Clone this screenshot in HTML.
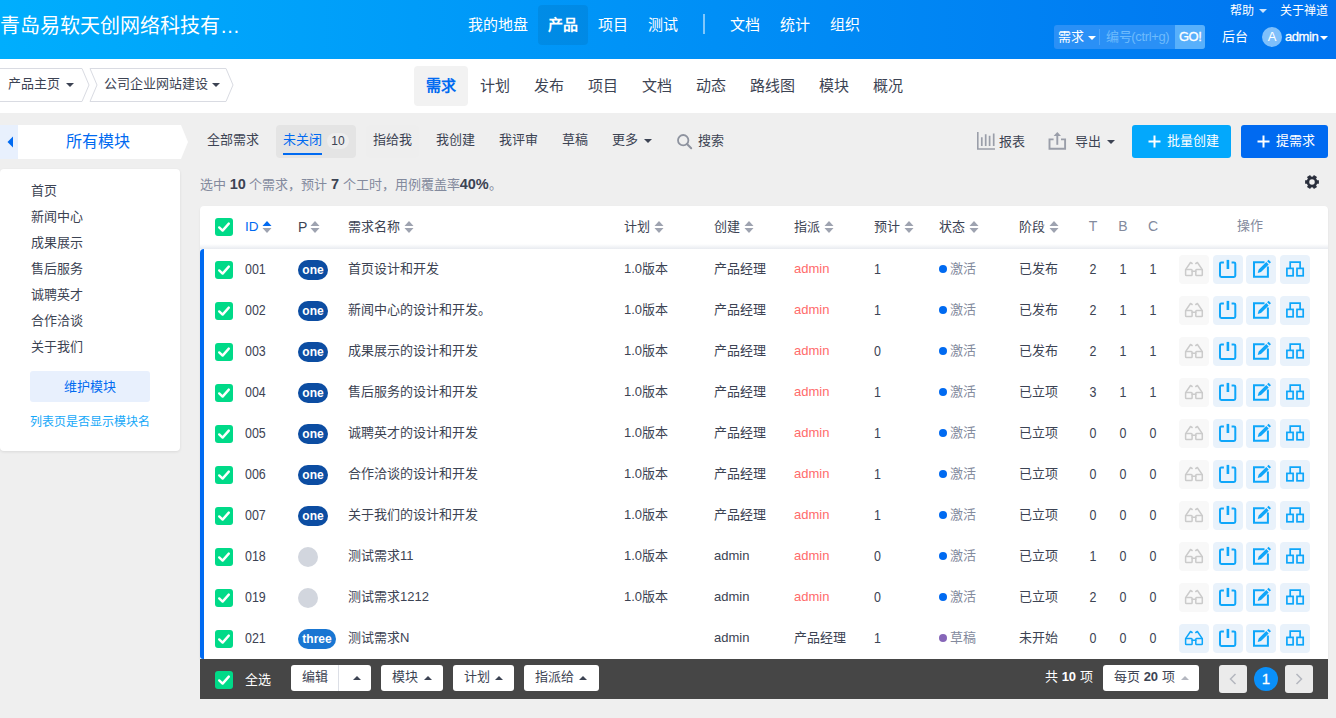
<!DOCTYPE html>
<html lang="zh-CN"><head><meta charset="utf-8"><title>需求</title>
<style>
*{box-sizing:border-box;margin:0;padding:0}
html,body{width:1336px;height:718px;overflow:hidden}
body{background:#efefef;font-family:"Liberation Sans",sans-serif;font-size:13px;color:#3c4353;position:relative;line-height:20px}
.abs{position:absolute}
.t{position:absolute;white-space:nowrap;line-height:20px}
#header{position:absolute;left:0;top:0;width:1336px;height:59px;background:linear-gradient(to right,#00aefd 0%,#0074f0 100%)}
#header .t{color:#fff}
#sub{position:absolute;left:0;top:59px;width:1336px;height:54px;background:#fff}
.caret{position:absolute;width:0;height:0;border-left:4px solid transparent;border-right:4px solid transparent;border-top:4px solid currentColor}
.caret.up{border-top:0;border-bottom:4px solid currentColor}
.cb{position:absolute;width:18px;height:18px;background:#00da88;border-radius:3px;display:block}
.cb svg{display:block}
.pill{position:absolute;height:20px;border-radius:10px;color:#fff;font-weight:bold;font-size:12px;line-height:20px;text-align:center}
.act{position:absolute;width:30px;height:29px;border-radius:4px;background:#e9f2fb}
.act.dis{background:#f8f8f8}
.act svg{display:block}
.num{font-size:14px;transform:scaleX(.89);transform-origin:left center}
.num.c{transform-origin:center center}
.fbtn{position:absolute;top:665px;height:26px;background:#fff;border-radius:3px;color:#3c4353}
</style></head><body>

<div id="header">
<div class="t" style="left:0px;top:12px;font-size:20px;line-height:28px;font-weight:300">青岛易软天创网络科技有…</div>
<div class="abs" style="left:538px;top:5px;width:50px;height:40px;border-radius:4px;background:rgba(0,0,0,.07)"></div>
<div class="t" style="left:468px;top:15px;font-size:15px;">我的地盘</div>
<div class="t" style="left:548px;top:15px;font-size:15px;font-weight:bold;">产品</div>
<div class="t" style="left:598px;top:15px;font-size:15px;">项目</div>
<div class="t" style="left:648px;top:15px;font-size:15px;">测试</div>
<div class="t" style="left:730px;top:15px;font-size:15px;">文档</div>
<div class="t" style="left:780px;top:15px;font-size:15px;">统计</div>
<div class="t" style="left:830px;top:15px;font-size:15px;">组织</div>
<div class="abs" style="left:703px;top:14px;width:2px;height:20px;background:rgba(255,255,255,.5)"></div>
<div class="t" style="left:1230px;top:1px;font-size:12px">帮助</div>
<div class="caret" style="left:1259px;top:9px;color:rgba(255,255,255,.8)"></div>
<div class="t" style="left:1280px;top:1px;font-size:12px">关于禅道</div>
<div class="abs" style="left:1054px;top:25px;width:151px;height:24px;border-radius:3px;background:#2a90f6"></div>
<div class="abs" style="left:1175px;top:25px;width:30px;height:24px;border-radius:0 3px 3px 0;background:#58b0fb"></div>
<div class="t" style="left:1058px;top:27px;font-size:13px">需求</div>
<div class="caret" style="left:1088px;top:36px;color:#fff"></div>
<div class="abs" style="left:1099px;top:29px;width:1px;height:16px;background:#4aa2f8"></div>
<div class="t" style="left:1106px;top:27px;font-size:13px;letter-spacing:-.35px;color:#6ebbfc">编号(ctrl+g)</div>
<div class="t" style="left:1179px;top:27px;font-size:13px;letter-spacing:-0.5px;-webkit-text-stroke:.3px #fff">GO!</div>
<div class="t" style="left:1222px;top:27px;font-size:13px">后台</div>
<div class="abs" style="left:1262px;top:27px;width:20px;height:20px;border-radius:10px;background:#7fc0fb;color:#fff;text-align:center;line-height:20px;font-size:13px">A</div>
<div class="t" style="left:1285px;top:27px;font-size:13px;letter-spacing:-0.45px;-webkit-text-stroke:.3px #fff">admin</div>
<div class="caret" style="left:1320px;top:36px;color:#fff;border-left-width:4.5px;border-right-width:4.5px;border-top-width:4.5px"></div>
</div>
<div id="sub">
<svg class="abs" style="left:0;top:8px" width="240" height="36" viewBox="0 0 240 36"><path d="M-2 1.5 H82 L89 18 L82 34.5 H-2 Z" fill="#fff" stroke="#d9dbe2" stroke-width="1"/><path d="M90 1.5 H226 L233 18 L226 34.5 H90 L97 18 Z" fill="#fff" stroke="#d9dbe2" stroke-width="1"/></svg>
<div class="t" style="left:8px;top:15px">产品主页</div><div class="caret" style="left:66px;top:24px;color:#3c4353"></div>
<div class="t" style="left:104px;top:15px">公司企业网站建设</div><div class="caret" style="left:212px;top:24px;color:#3c4353"></div>
<div class="abs" style="left:414px;top:7px;width:54px;height:40px;border-radius:4px;background:#f2f2f2"></div>
<div class="t" style="left:426px;top:17px;font-size:15px;color:#006af1;font-weight:bold;">需求</div>
<div class="t" style="left:480px;top:17px;font-size:15px;">计划</div>
<div class="t" style="left:534px;top:17px;font-size:15px;">发布</div>
<div class="t" style="left:588px;top:17px;font-size:15px;">项目</div>
<div class="t" style="left:642px;top:17px;font-size:15px;">文档</div>
<div class="t" style="left:696px;top:17px;font-size:15px;">动态</div>
<div class="t" style="left:750px;top:17px;font-size:15px;">路线图</div>
<div class="t" style="left:819px;top:17px;font-size:15px;">模块</div>
<div class="t" style="left:873px;top:17px;font-size:15px;">概况</div>
</div>
<div class="abs" style="left:0;top:125px;width:18px;height:34px;background:#e8f0fd"></div>
<svg class="abs" style="left:6px;top:136px" width="8" height="12" viewBox="0 0 8 12"><path d="M7 0.5 V11.5 L1.5 6 Z" fill="#006af1"/></svg>
<svg class="abs" style="left:18px;top:125px" width="171" height="34" viewBox="0 0 171 34"><path d="M0 0 H163 L170 17 L163 34 H0 Z" fill="#fff"/></svg>
<div class="t" style="left:66px;top:131px;font-size:16px;line-height:22px;color:#006af1">所有模块</div>
<div class="abs" style="left:276px;top:125px;width:80px;height:33px;border-radius:4px;background:#e4e4e4"></div>
<div class="abs" style="left:366px;top:125px;width:53px;height:33px;border-radius:4px;background:#eeeeee"></div>
<div class="t" style="left:207px;top:130px">全部需求</div>
<div class="t" style="left:283px;top:130px;color:#006af1">未关闭</div>
<div class="abs" style="left:283px;top:153px;width:39px;height:2px;background:#006af1"></div>
<div class="abs" style="left:327px;top:133px;width:22px;height:16px;border-radius:8px;background:#ededed;font-size:12px;line-height:16px;text-align:center">10</div>
<div class="t" style="left:373px;top:130px">指给我</div>
<div class="t" style="left:436px;top:130px">我创建</div>
<div class="t" style="left:499px;top:130px">我评审</div>
<div class="t" style="left:562px;top:130px">草稿</div>
<div class="t" style="left:612px;top:130px">更多</div><div class="caret" style="left:644px;top:139px;color:#3c4353"></div>
<svg class="abs" style="left:676px;top:133px" width="17" height="17" viewBox="0 0 17 17"><circle cx="7.2" cy="7.2" r="5.2" fill="none" stroke="#8e939f" stroke-width="1.8"/><path d="M11 11 L15.2 15.2" stroke="#8e939f" stroke-width="2" stroke-linecap="round"/></svg>
<div class="t" style="left:698px;top:131px">搜索</div>
<svg class="abs" style="left:976px;top:131px" width="20" height="20" viewBox="0 0 20 20"><path d="M1.8 1 V18 H19" fill="none" stroke="#9a9ea9" stroke-width="1.6"/><path d="M5.8 6.2 V15 M9.7 3.3 V15 M13.6 4.8 V15 M17.7 2.5 V15" stroke="#9a9ea9" stroke-width="1.7"/></svg>
<div class="t" style="left:999px;top:132px">报表</div>
<svg class="abs" style="left:1047px;top:130px" width="21" height="21" viewBox="0 0 21 21"><path d="M6.6 9.4 H2.5 V18.8 H18.1 V9.4 H14" fill="none" stroke="#9a9ea9" stroke-width="1.9"/><path d="M10.3 14.8 V4.5" fill="none" stroke="#9a9ea9" stroke-width="1.9"/><path d="M6.6 6 L10.3 2 L14 6 Z" fill="#9a9ea9"/></svg>
<div class="t" style="left:1075px;top:132px">导出</div><div class="caret" style="left:1107px;top:140px;color:#3c4353"></div>
<div class="abs" style="left:1132px;top:125px;width:99px;height:33px;border-radius:3px;background:#03a8fc"></div>
<svg class="abs" style="left:1148px;top:135px" width="13" height="13" viewBox="0 0 13 13"><path d="M6.5 0.5 V12.5 M0.5 6.5 H12.5" stroke="#fff" stroke-width="2"/></svg>
<div class="t" style="left:1167px;top:131px;color:#fff">批量创建</div>
<div class="abs" style="left:1241px;top:125px;width:87px;height:33px;border-radius:3px;background:#006af1"></div>
<svg class="abs" style="left:1257px;top:135px" width="13" height="13" viewBox="0 0 13 13"><path d="M6.5 0.5 V12.5 M0.5 6.5 H12.5" stroke="#fff" stroke-width="2"/></svg>
<div class="t" style="left:1276px;top:131px;color:#fff">提需求</div>
<div class="abs" style="left:0;top:169px;width:180px;height:282px;background:#fff;border-radius:4px;box-shadow:0 1px 3px rgba(0,0,0,.09)"></div>
<div class="t" style="left:31px;top:181px">首页</div>
<div class="t" style="left:31px;top:207px">新闻中心</div>
<div class="t" style="left:31px;top:233px">成果展示</div>
<div class="t" style="left:31px;top:259px">售后服务</div>
<div class="t" style="left:31px;top:285px">诚聘英才</div>
<div class="t" style="left:31px;top:311px">合作洽谈</div>
<div class="t" style="left:31px;top:337px">关于我们</div>
<div class="abs" style="left:30px;top:371px;width:120px;height:31px;border-radius:3px;background:#e8f0fd;color:#006af1;text-align:center;line-height:31px">维护模块</div>
<div class="t" style="left:30px;top:412px;font-size:12px;color:#16a8f8">列表页是否显示模块名</div>
<div class="t" style="left:200px;top:174px;color:#838a9d">选中 <b style="color:#3c4353;font-size:14.5px">10</b> 个需求，预计 <b style="color:#3c4353;font-size:14.5px">7</b> 个工时，用例覆盖率<b style="color:#3c4353;font-size:14.5px">40%</b>。</div>
<svg class="abs" style="left:1304px;top:174px" width="16" height="16" viewBox="0 0 16 16"><circle cx="8" cy="8" r="4.1" fill="none" stroke="#2a2f3c" stroke-width="2.7"/><path d="M12.60 8.00 L14.90 8.00 M10.30 11.98 L11.45 13.98 M5.70 11.98 L4.55 13.98 M3.40 8.00 L1.10 8.00 M5.70 4.02 L4.55 2.02 M10.30 4.02 L11.45 2.02" stroke="#2a2f3c" stroke-width="3.6" stroke-linecap="butt"/></svg>
<div class="abs" style="left:200px;top:206px;width:1128px;height:453px;background:#fff;border-radius:4px 4px 0 0;box-shadow:0 1px 2px rgba(0,0,0,.08)"></div>
<div class="abs" style="left:200px;top:244px;width:1128px;height:5px;background:linear-gradient(to bottom,#fff,#e8ebf0)"></div>
<div class="abs" style="left:200px;top:249px;width:4px;height:410px;background:#006af1;border-radius:4px 0 0 3px"></div>
<span class="cb" style="left:215px;top:218px"><svg viewBox="0 0 18 18" width="18" height="18"><path d="M4.2 9.4 L7.6 12.6 L13.8 5.6" fill="none" stroke="#fff" stroke-width="2.4" stroke-linecap="round" stroke-linejoin="round"/></svg></span>
<div class="t" style="left:245px;top:217px;color:#006af1;font-size:13.5px">ID</div><svg class="abs" style="left:262px;top:220px" width="10" height="14" viewBox="0 0 10 14"><path d="M5 1 L9.5 6 H0.5 Z" fill="#006af1"/><path d="M5 13 L9.5 8 H0.5 Z" fill="#9ea3b0"/></svg>
<div class="t" style="left:298px;top:217px;font-size:14px">P</div><svg class="abs" style="left:310px;top:220px" width="10" height="14" viewBox="0 0 10 14"><path d="M5 1 L9.5 6 H0.5 Z" fill="#9ea3b0"/><path d="M5 13 L9.5 8 H0.5 Z" fill="#9ea3b0"/></svg>
<div class="t" style="left:348px;top:217px">需求名称</div><svg class="abs" style="left:404px;top:220px" width="10" height="14" viewBox="0 0 10 14"><path d="M5 1 L9.5 6 H0.5 Z" fill="#9ea3b0"/><path d="M5 13 L9.5 8 H0.5 Z" fill="#9ea3b0"/></svg>
<div class="t" style="left:624px;top:217px">计划</div><svg class="abs" style="left:654px;top:220px" width="10" height="14" viewBox="0 0 10 14"><path d="M5 1 L9.5 6 H0.5 Z" fill="#9ea3b0"/><path d="M5 13 L9.5 8 H0.5 Z" fill="#9ea3b0"/></svg>
<div class="t" style="left:714px;top:217px">创建</div><svg class="abs" style="left:744px;top:220px" width="10" height="14" viewBox="0 0 10 14"><path d="M5 1 L9.5 6 H0.5 Z" fill="#9ea3b0"/><path d="M5 13 L9.5 8 H0.5 Z" fill="#9ea3b0"/></svg>
<div class="t" style="left:794px;top:217px">指派</div><svg class="abs" style="left:824px;top:220px" width="10" height="14" viewBox="0 0 10 14"><path d="M5 1 L9.5 6 H0.5 Z" fill="#9ea3b0"/><path d="M5 13 L9.5 8 H0.5 Z" fill="#9ea3b0"/></svg>
<div class="t" style="left:874px;top:217px">预计</div><svg class="abs" style="left:904px;top:220px" width="10" height="14" viewBox="0 0 10 14"><path d="M5 1 L9.5 6 H0.5 Z" fill="#9ea3b0"/><path d="M5 13 L9.5 8 H0.5 Z" fill="#9ea3b0"/></svg>
<div class="t" style="left:939px;top:217px">状态</div><svg class="abs" style="left:969px;top:220px" width="10" height="14" viewBox="0 0 10 14"><path d="M5 1 L9.5 6 H0.5 Z" fill="#9ea3b0"/><path d="M5 13 L9.5 8 H0.5 Z" fill="#9ea3b0"/></svg>
<div class="t" style="left:1019px;top:217px">阶段</div><svg class="abs" style="left:1049px;top:220px" width="10" height="14" viewBox="0 0 10 14"><path d="M5 1 L9.5 6 H0.5 Z" fill="#9ea3b0"/><path d="M5 13 L9.5 8 H0.5 Z" fill="#9ea3b0"/></svg>
<div class="t" style="left:1083px;width:20px;text-align:center;top:216px;color:#838a9d;font-size:14px">T</div>
<div class="t" style="left:1113px;width:20px;text-align:center;top:216px;color:#838a9d;font-size:14px">B</div>
<div class="t" style="left:1143px;width:20px;text-align:center;top:216px;color:#838a9d;font-size:14px">C</div>
<div class="t" style="left:1237px;top:216px;color:#838a9d">操作</div>
<span class="cb" style="left:215px;top:261px"><svg viewBox="0 0 18 18" width="18" height="18"><path d="M4.2 9.4 L7.6 12.6 L13.8 5.6" fill="none" stroke="#fff" stroke-width="2.4" stroke-linecap="round" stroke-linejoin="round"/></svg></span>
<div class="t num" style="left:245px;top:259px">001</div>
<div class="pill" style="left:298px;top:260px;width:30px;background:#0c4da2">one</div>
<div class="t" style="left:348px;top:259px">首页设计和开发</div>
<div class="t" style="left:624px;top:259px">1.0版本</div>
<div class="t" style="left:714px;top:259px">产品经理</div>
<div class="t" style="left:794px;top:259px;color:#ff6b6b">admin</div>
<div class="t num" style="left:874px;top:259px">1</div>
<div class="abs" style="left:939px;top:265px;width:8px;height:8px;border-radius:4px;background:#006af1"></div>
<div class="t" style="left:950px;top:259px;color:#838a9d">激活</div>
<div class="t" style="left:1019px;top:259px">已发布</div>
<div class="t num c" style="left:1083px;width:20px;text-align:center;top:259px">2</div>
<div class="t num c" style="left:1113px;width:20px;text-align:center;top:259px">1</div>
<div class="t num c" style="left:1143px;width:20px;text-align:center;top:259px">1</div>
<div class="act dis" style="left:1179px;top:255px"><svg viewBox="0 0 30 29" width="30" height="29"><g fill="none" stroke="#cbcbcb" stroke-width="1.5" stroke-linejoin="round" stroke-linecap="round"><rect x="6.6" y="14.4" width="6.5" height="6.2" rx="0.8"/><rect x="16.8" y="14.4" width="6.5" height="6.2" rx="0.8"/><path d="M13.1 16.2 H16.8"/><path d="M6.6 14.6 L11.5 7.5 L13.1 8.5"/><path d="M23.3 14.6 L18.4 7.5 L16.8 8.5"/></g></svg></div>
<div class="act" style="left:1213px;top:255px"><svg viewBox="0 0 30 29" width="30" height="29"><g fill="none" stroke="#0ea6fa" stroke-linecap="butt" stroke-linejoin="round"><path d="M10.9 7.4 H8.4 Q7 7.4 7 8.8 V20.6 Q7 22 8.4 22 H20.9 Q22.3 22 22.3 20.6 V8.8 Q22.3 7.4 20.9 7.4 H18.6" stroke-width="2"/><path d="M14.9 4.9 V14" stroke-width="2.6"/></g></svg></div>
<div class="act" style="left:1246px;top:255px"><svg viewBox="0 0 30 29" width="30" height="29"><path d="M18.5 7.2 H8 V21.7 H21.9 V11.5" fill="none" stroke="#0ea6fa" stroke-width="2" stroke-linejoin="miter"/><path d="M11.7 17.9 L12.7 14.6 L20.3 7 L22.7 9.4 L15 17 Z M21.1 6.2 L22.6 4.8 L25 7.2 L23.5 8.6 Z" fill="#0ea6fa"/></svg></div>
<div class="act" style="left:1280px;top:255px"><svg viewBox="0 0 30 29" width="30" height="29"><g fill="none" stroke="#0ea6fa" stroke-width="1.7" stroke-linejoin="miter"><rect x="6.9" y="13.4" width="6.2" height="7.4"/><rect x="17" y="13.4" width="6.2" height="7.4"/><path d="M10.2 13.4 V7.1 H20.1 V13.4"/></g></svg></div>
<span class="cb" style="left:215px;top:302px"><svg viewBox="0 0 18 18" width="18" height="18"><path d="M4.2 9.4 L7.6 12.6 L13.8 5.6" fill="none" stroke="#fff" stroke-width="2.4" stroke-linecap="round" stroke-linejoin="round"/></svg></span>
<div class="t num" style="left:245px;top:300px">002</div>
<div class="pill" style="left:298px;top:301px;width:30px;background:#0c4da2">one</div>
<div class="t" style="left:348px;top:300px">新闻中心的设计和开发。</div>
<div class="t" style="left:624px;top:300px">1.0版本</div>
<div class="t" style="left:714px;top:300px">产品经理</div>
<div class="t" style="left:794px;top:300px;color:#ff6b6b">admin</div>
<div class="t num" style="left:874px;top:300px">1</div>
<div class="abs" style="left:939px;top:306px;width:8px;height:8px;border-radius:4px;background:#006af1"></div>
<div class="t" style="left:950px;top:300px;color:#838a9d">激活</div>
<div class="t" style="left:1019px;top:300px">已发布</div>
<div class="t num c" style="left:1083px;width:20px;text-align:center;top:300px">2</div>
<div class="t num c" style="left:1113px;width:20px;text-align:center;top:300px">1</div>
<div class="t num c" style="left:1143px;width:20px;text-align:center;top:300px">1</div>
<div class="act dis" style="left:1179px;top:296px"><svg viewBox="0 0 30 29" width="30" height="29"><g fill="none" stroke="#cbcbcb" stroke-width="1.5" stroke-linejoin="round" stroke-linecap="round"><rect x="6.6" y="14.4" width="6.5" height="6.2" rx="0.8"/><rect x="16.8" y="14.4" width="6.5" height="6.2" rx="0.8"/><path d="M13.1 16.2 H16.8"/><path d="M6.6 14.6 L11.5 7.5 L13.1 8.5"/><path d="M23.3 14.6 L18.4 7.5 L16.8 8.5"/></g></svg></div>
<div class="act" style="left:1213px;top:296px"><svg viewBox="0 0 30 29" width="30" height="29"><g fill="none" stroke="#0ea6fa" stroke-linecap="butt" stroke-linejoin="round"><path d="M10.9 7.4 H8.4 Q7 7.4 7 8.8 V20.6 Q7 22 8.4 22 H20.9 Q22.3 22 22.3 20.6 V8.8 Q22.3 7.4 20.9 7.4 H18.6" stroke-width="2"/><path d="M14.9 4.9 V14" stroke-width="2.6"/></g></svg></div>
<div class="act" style="left:1246px;top:296px"><svg viewBox="0 0 30 29" width="30" height="29"><path d="M18.5 7.2 H8 V21.7 H21.9 V11.5" fill="none" stroke="#0ea6fa" stroke-width="2" stroke-linejoin="miter"/><path d="M11.7 17.9 L12.7 14.6 L20.3 7 L22.7 9.4 L15 17 Z M21.1 6.2 L22.6 4.8 L25 7.2 L23.5 8.6 Z" fill="#0ea6fa"/></svg></div>
<div class="act" style="left:1280px;top:296px"><svg viewBox="0 0 30 29" width="30" height="29"><g fill="none" stroke="#0ea6fa" stroke-width="1.7" stroke-linejoin="miter"><rect x="6.9" y="13.4" width="6.2" height="7.4"/><rect x="17" y="13.4" width="6.2" height="7.4"/><path d="M10.2 13.4 V7.1 H20.1 V13.4"/></g></svg></div>
<span class="cb" style="left:215px;top:343px"><svg viewBox="0 0 18 18" width="18" height="18"><path d="M4.2 9.4 L7.6 12.6 L13.8 5.6" fill="none" stroke="#fff" stroke-width="2.4" stroke-linecap="round" stroke-linejoin="round"/></svg></span>
<div class="t num" style="left:245px;top:341px">003</div>
<div class="pill" style="left:298px;top:342px;width:30px;background:#0c4da2">one</div>
<div class="t" style="left:348px;top:341px">成果展示的设计和开发</div>
<div class="t" style="left:624px;top:341px">1.0版本</div>
<div class="t" style="left:714px;top:341px">产品经理</div>
<div class="t" style="left:794px;top:341px;color:#ff6b6b">admin</div>
<div class="t num" style="left:874px;top:341px">0</div>
<div class="abs" style="left:939px;top:347px;width:8px;height:8px;border-radius:4px;background:#006af1"></div>
<div class="t" style="left:950px;top:341px;color:#838a9d">激活</div>
<div class="t" style="left:1019px;top:341px">已发布</div>
<div class="t num c" style="left:1083px;width:20px;text-align:center;top:341px">2</div>
<div class="t num c" style="left:1113px;width:20px;text-align:center;top:341px">1</div>
<div class="t num c" style="left:1143px;width:20px;text-align:center;top:341px">1</div>
<div class="act dis" style="left:1179px;top:337px"><svg viewBox="0 0 30 29" width="30" height="29"><g fill="none" stroke="#cbcbcb" stroke-width="1.5" stroke-linejoin="round" stroke-linecap="round"><rect x="6.6" y="14.4" width="6.5" height="6.2" rx="0.8"/><rect x="16.8" y="14.4" width="6.5" height="6.2" rx="0.8"/><path d="M13.1 16.2 H16.8"/><path d="M6.6 14.6 L11.5 7.5 L13.1 8.5"/><path d="M23.3 14.6 L18.4 7.5 L16.8 8.5"/></g></svg></div>
<div class="act" style="left:1213px;top:337px"><svg viewBox="0 0 30 29" width="30" height="29"><g fill="none" stroke="#0ea6fa" stroke-linecap="butt" stroke-linejoin="round"><path d="M10.9 7.4 H8.4 Q7 7.4 7 8.8 V20.6 Q7 22 8.4 22 H20.9 Q22.3 22 22.3 20.6 V8.8 Q22.3 7.4 20.9 7.4 H18.6" stroke-width="2"/><path d="M14.9 4.9 V14" stroke-width="2.6"/></g></svg></div>
<div class="act" style="left:1246px;top:337px"><svg viewBox="0 0 30 29" width="30" height="29"><path d="M18.5 7.2 H8 V21.7 H21.9 V11.5" fill="none" stroke="#0ea6fa" stroke-width="2" stroke-linejoin="miter"/><path d="M11.7 17.9 L12.7 14.6 L20.3 7 L22.7 9.4 L15 17 Z M21.1 6.2 L22.6 4.8 L25 7.2 L23.5 8.6 Z" fill="#0ea6fa"/></svg></div>
<div class="act" style="left:1280px;top:337px"><svg viewBox="0 0 30 29" width="30" height="29"><g fill="none" stroke="#0ea6fa" stroke-width="1.7" stroke-linejoin="miter"><rect x="6.9" y="13.4" width="6.2" height="7.4"/><rect x="17" y="13.4" width="6.2" height="7.4"/><path d="M10.2 13.4 V7.1 H20.1 V13.4"/></g></svg></div>
<span class="cb" style="left:215px;top:384px"><svg viewBox="0 0 18 18" width="18" height="18"><path d="M4.2 9.4 L7.6 12.6 L13.8 5.6" fill="none" stroke="#fff" stroke-width="2.4" stroke-linecap="round" stroke-linejoin="round"/></svg></span>
<div class="t num" style="left:245px;top:382px">004</div>
<div class="pill" style="left:298px;top:383px;width:30px;background:#0c4da2">one</div>
<div class="t" style="left:348px;top:382px">售后服务的设计和开发</div>
<div class="t" style="left:624px;top:382px">1.0版本</div>
<div class="t" style="left:714px;top:382px">产品经理</div>
<div class="t" style="left:794px;top:382px;color:#ff6b6b">admin</div>
<div class="t num" style="left:874px;top:382px">1</div>
<div class="abs" style="left:939px;top:388px;width:8px;height:8px;border-radius:4px;background:#006af1"></div>
<div class="t" style="left:950px;top:382px;color:#838a9d">激活</div>
<div class="t" style="left:1019px;top:382px">已立项</div>
<div class="t num c" style="left:1083px;width:20px;text-align:center;top:382px">3</div>
<div class="t num c" style="left:1113px;width:20px;text-align:center;top:382px">1</div>
<div class="t num c" style="left:1143px;width:20px;text-align:center;top:382px">1</div>
<div class="act dis" style="left:1179px;top:378px"><svg viewBox="0 0 30 29" width="30" height="29"><g fill="none" stroke="#cbcbcb" stroke-width="1.5" stroke-linejoin="round" stroke-linecap="round"><rect x="6.6" y="14.4" width="6.5" height="6.2" rx="0.8"/><rect x="16.8" y="14.4" width="6.5" height="6.2" rx="0.8"/><path d="M13.1 16.2 H16.8"/><path d="M6.6 14.6 L11.5 7.5 L13.1 8.5"/><path d="M23.3 14.6 L18.4 7.5 L16.8 8.5"/></g></svg></div>
<div class="act" style="left:1213px;top:378px"><svg viewBox="0 0 30 29" width="30" height="29"><g fill="none" stroke="#0ea6fa" stroke-linecap="butt" stroke-linejoin="round"><path d="M10.9 7.4 H8.4 Q7 7.4 7 8.8 V20.6 Q7 22 8.4 22 H20.9 Q22.3 22 22.3 20.6 V8.8 Q22.3 7.4 20.9 7.4 H18.6" stroke-width="2"/><path d="M14.9 4.9 V14" stroke-width="2.6"/></g></svg></div>
<div class="act" style="left:1246px;top:378px"><svg viewBox="0 0 30 29" width="30" height="29"><path d="M18.5 7.2 H8 V21.7 H21.9 V11.5" fill="none" stroke="#0ea6fa" stroke-width="2" stroke-linejoin="miter"/><path d="M11.7 17.9 L12.7 14.6 L20.3 7 L22.7 9.4 L15 17 Z M21.1 6.2 L22.6 4.8 L25 7.2 L23.5 8.6 Z" fill="#0ea6fa"/></svg></div>
<div class="act" style="left:1280px;top:378px"><svg viewBox="0 0 30 29" width="30" height="29"><g fill="none" stroke="#0ea6fa" stroke-width="1.7" stroke-linejoin="miter"><rect x="6.9" y="13.4" width="6.2" height="7.4"/><rect x="17" y="13.4" width="6.2" height="7.4"/><path d="M10.2 13.4 V7.1 H20.1 V13.4"/></g></svg></div>
<span class="cb" style="left:215px;top:425px"><svg viewBox="0 0 18 18" width="18" height="18"><path d="M4.2 9.4 L7.6 12.6 L13.8 5.6" fill="none" stroke="#fff" stroke-width="2.4" stroke-linecap="round" stroke-linejoin="round"/></svg></span>
<div class="t num" style="left:245px;top:423px">005</div>
<div class="pill" style="left:298px;top:424px;width:30px;background:#0c4da2">one</div>
<div class="t" style="left:348px;top:423px">诚聘英才的设计和开发</div>
<div class="t" style="left:624px;top:423px">1.0版本</div>
<div class="t" style="left:714px;top:423px">产品经理</div>
<div class="t" style="left:794px;top:423px;color:#ff6b6b">admin</div>
<div class="t num" style="left:874px;top:423px">1</div>
<div class="abs" style="left:939px;top:429px;width:8px;height:8px;border-radius:4px;background:#006af1"></div>
<div class="t" style="left:950px;top:423px;color:#838a9d">激活</div>
<div class="t" style="left:1019px;top:423px">已立项</div>
<div class="t num c" style="left:1083px;width:20px;text-align:center;top:423px">0</div>
<div class="t num c" style="left:1113px;width:20px;text-align:center;top:423px">0</div>
<div class="t num c" style="left:1143px;width:20px;text-align:center;top:423px">0</div>
<div class="act dis" style="left:1179px;top:419px"><svg viewBox="0 0 30 29" width="30" height="29"><g fill="none" stroke="#cbcbcb" stroke-width="1.5" stroke-linejoin="round" stroke-linecap="round"><rect x="6.6" y="14.4" width="6.5" height="6.2" rx="0.8"/><rect x="16.8" y="14.4" width="6.5" height="6.2" rx="0.8"/><path d="M13.1 16.2 H16.8"/><path d="M6.6 14.6 L11.5 7.5 L13.1 8.5"/><path d="M23.3 14.6 L18.4 7.5 L16.8 8.5"/></g></svg></div>
<div class="act" style="left:1213px;top:419px"><svg viewBox="0 0 30 29" width="30" height="29"><g fill="none" stroke="#0ea6fa" stroke-linecap="butt" stroke-linejoin="round"><path d="M10.9 7.4 H8.4 Q7 7.4 7 8.8 V20.6 Q7 22 8.4 22 H20.9 Q22.3 22 22.3 20.6 V8.8 Q22.3 7.4 20.9 7.4 H18.6" stroke-width="2"/><path d="M14.9 4.9 V14" stroke-width="2.6"/></g></svg></div>
<div class="act" style="left:1246px;top:419px"><svg viewBox="0 0 30 29" width="30" height="29"><path d="M18.5 7.2 H8 V21.7 H21.9 V11.5" fill="none" stroke="#0ea6fa" stroke-width="2" stroke-linejoin="miter"/><path d="M11.7 17.9 L12.7 14.6 L20.3 7 L22.7 9.4 L15 17 Z M21.1 6.2 L22.6 4.8 L25 7.2 L23.5 8.6 Z" fill="#0ea6fa"/></svg></div>
<div class="act" style="left:1280px;top:419px"><svg viewBox="0 0 30 29" width="30" height="29"><g fill="none" stroke="#0ea6fa" stroke-width="1.7" stroke-linejoin="miter"><rect x="6.9" y="13.4" width="6.2" height="7.4"/><rect x="17" y="13.4" width="6.2" height="7.4"/><path d="M10.2 13.4 V7.1 H20.1 V13.4"/></g></svg></div>
<span class="cb" style="left:215px;top:466px"><svg viewBox="0 0 18 18" width="18" height="18"><path d="M4.2 9.4 L7.6 12.6 L13.8 5.6" fill="none" stroke="#fff" stroke-width="2.4" stroke-linecap="round" stroke-linejoin="round"/></svg></span>
<div class="t num" style="left:245px;top:464px">006</div>
<div class="pill" style="left:298px;top:465px;width:30px;background:#0c4da2">one</div>
<div class="t" style="left:348px;top:464px">合作洽谈的设计和开发</div>
<div class="t" style="left:624px;top:464px">1.0版本</div>
<div class="t" style="left:714px;top:464px">产品经理</div>
<div class="t" style="left:794px;top:464px;color:#ff6b6b">admin</div>
<div class="t num" style="left:874px;top:464px">1</div>
<div class="abs" style="left:939px;top:470px;width:8px;height:8px;border-radius:4px;background:#006af1"></div>
<div class="t" style="left:950px;top:464px;color:#838a9d">激活</div>
<div class="t" style="left:1019px;top:464px">已立项</div>
<div class="t num c" style="left:1083px;width:20px;text-align:center;top:464px">0</div>
<div class="t num c" style="left:1113px;width:20px;text-align:center;top:464px">0</div>
<div class="t num c" style="left:1143px;width:20px;text-align:center;top:464px">0</div>
<div class="act dis" style="left:1179px;top:460px"><svg viewBox="0 0 30 29" width="30" height="29"><g fill="none" stroke="#cbcbcb" stroke-width="1.5" stroke-linejoin="round" stroke-linecap="round"><rect x="6.6" y="14.4" width="6.5" height="6.2" rx="0.8"/><rect x="16.8" y="14.4" width="6.5" height="6.2" rx="0.8"/><path d="M13.1 16.2 H16.8"/><path d="M6.6 14.6 L11.5 7.5 L13.1 8.5"/><path d="M23.3 14.6 L18.4 7.5 L16.8 8.5"/></g></svg></div>
<div class="act" style="left:1213px;top:460px"><svg viewBox="0 0 30 29" width="30" height="29"><g fill="none" stroke="#0ea6fa" stroke-linecap="butt" stroke-linejoin="round"><path d="M10.9 7.4 H8.4 Q7 7.4 7 8.8 V20.6 Q7 22 8.4 22 H20.9 Q22.3 22 22.3 20.6 V8.8 Q22.3 7.4 20.9 7.4 H18.6" stroke-width="2"/><path d="M14.9 4.9 V14" stroke-width="2.6"/></g></svg></div>
<div class="act" style="left:1246px;top:460px"><svg viewBox="0 0 30 29" width="30" height="29"><path d="M18.5 7.2 H8 V21.7 H21.9 V11.5" fill="none" stroke="#0ea6fa" stroke-width="2" stroke-linejoin="miter"/><path d="M11.7 17.9 L12.7 14.6 L20.3 7 L22.7 9.4 L15 17 Z M21.1 6.2 L22.6 4.8 L25 7.2 L23.5 8.6 Z" fill="#0ea6fa"/></svg></div>
<div class="act" style="left:1280px;top:460px"><svg viewBox="0 0 30 29" width="30" height="29"><g fill="none" stroke="#0ea6fa" stroke-width="1.7" stroke-linejoin="miter"><rect x="6.9" y="13.4" width="6.2" height="7.4"/><rect x="17" y="13.4" width="6.2" height="7.4"/><path d="M10.2 13.4 V7.1 H20.1 V13.4"/></g></svg></div>
<span class="cb" style="left:215px;top:507px"><svg viewBox="0 0 18 18" width="18" height="18"><path d="M4.2 9.4 L7.6 12.6 L13.8 5.6" fill="none" stroke="#fff" stroke-width="2.4" stroke-linecap="round" stroke-linejoin="round"/></svg></span>
<div class="t num" style="left:245px;top:505px">007</div>
<div class="pill" style="left:298px;top:506px;width:30px;background:#0c4da2">one</div>
<div class="t" style="left:348px;top:505px">关于我们的设计和开发</div>
<div class="t" style="left:624px;top:505px">1.0版本</div>
<div class="t" style="left:714px;top:505px">产品经理</div>
<div class="t" style="left:794px;top:505px;color:#ff6b6b">admin</div>
<div class="t num" style="left:874px;top:505px">1</div>
<div class="abs" style="left:939px;top:511px;width:8px;height:8px;border-radius:4px;background:#006af1"></div>
<div class="t" style="left:950px;top:505px;color:#838a9d">激活</div>
<div class="t" style="left:1019px;top:505px">已立项</div>
<div class="t num c" style="left:1083px;width:20px;text-align:center;top:505px">0</div>
<div class="t num c" style="left:1113px;width:20px;text-align:center;top:505px">0</div>
<div class="t num c" style="left:1143px;width:20px;text-align:center;top:505px">0</div>
<div class="act dis" style="left:1179px;top:501px"><svg viewBox="0 0 30 29" width="30" height="29"><g fill="none" stroke="#cbcbcb" stroke-width="1.5" stroke-linejoin="round" stroke-linecap="round"><rect x="6.6" y="14.4" width="6.5" height="6.2" rx="0.8"/><rect x="16.8" y="14.4" width="6.5" height="6.2" rx="0.8"/><path d="M13.1 16.2 H16.8"/><path d="M6.6 14.6 L11.5 7.5 L13.1 8.5"/><path d="M23.3 14.6 L18.4 7.5 L16.8 8.5"/></g></svg></div>
<div class="act" style="left:1213px;top:501px"><svg viewBox="0 0 30 29" width="30" height="29"><g fill="none" stroke="#0ea6fa" stroke-linecap="butt" stroke-linejoin="round"><path d="M10.9 7.4 H8.4 Q7 7.4 7 8.8 V20.6 Q7 22 8.4 22 H20.9 Q22.3 22 22.3 20.6 V8.8 Q22.3 7.4 20.9 7.4 H18.6" stroke-width="2"/><path d="M14.9 4.9 V14" stroke-width="2.6"/></g></svg></div>
<div class="act" style="left:1246px;top:501px"><svg viewBox="0 0 30 29" width="30" height="29"><path d="M18.5 7.2 H8 V21.7 H21.9 V11.5" fill="none" stroke="#0ea6fa" stroke-width="2" stroke-linejoin="miter"/><path d="M11.7 17.9 L12.7 14.6 L20.3 7 L22.7 9.4 L15 17 Z M21.1 6.2 L22.6 4.8 L25 7.2 L23.5 8.6 Z" fill="#0ea6fa"/></svg></div>
<div class="act" style="left:1280px;top:501px"><svg viewBox="0 0 30 29" width="30" height="29"><g fill="none" stroke="#0ea6fa" stroke-width="1.7" stroke-linejoin="miter"><rect x="6.9" y="13.4" width="6.2" height="7.4"/><rect x="17" y="13.4" width="6.2" height="7.4"/><path d="M10.2 13.4 V7.1 H20.1 V13.4"/></g></svg></div>
<span class="cb" style="left:215px;top:548px"><svg viewBox="0 0 18 18" width="18" height="18"><path d="M4.2 9.4 L7.6 12.6 L13.8 5.6" fill="none" stroke="#fff" stroke-width="2.4" stroke-linecap="round" stroke-linejoin="round"/></svg></span>
<div class="t num" style="left:245px;top:546px">018</div>
<div class="pill" style="left:298px;top:547px;width:20px;background:#d2d6de"></div>
<div class="t" style="left:348px;top:546px">测试需求11</div>
<div class="t" style="left:624px;top:546px">1.0版本</div>
<div class="t" style="left:714px;top:546px">admin</div>
<div class="t" style="left:794px;top:546px;color:#ff6b6b">admin</div>
<div class="t num" style="left:874px;top:546px">0</div>
<div class="abs" style="left:939px;top:552px;width:8px;height:8px;border-radius:4px;background:#006af1"></div>
<div class="t" style="left:950px;top:546px;color:#838a9d">激活</div>
<div class="t" style="left:1019px;top:546px">已立项</div>
<div class="t num c" style="left:1083px;width:20px;text-align:center;top:546px">1</div>
<div class="t num c" style="left:1113px;width:20px;text-align:center;top:546px">0</div>
<div class="t num c" style="left:1143px;width:20px;text-align:center;top:546px">0</div>
<div class="act dis" style="left:1179px;top:542px"><svg viewBox="0 0 30 29" width="30" height="29"><g fill="none" stroke="#cbcbcb" stroke-width="1.5" stroke-linejoin="round" stroke-linecap="round"><rect x="6.6" y="14.4" width="6.5" height="6.2" rx="0.8"/><rect x="16.8" y="14.4" width="6.5" height="6.2" rx="0.8"/><path d="M13.1 16.2 H16.8"/><path d="M6.6 14.6 L11.5 7.5 L13.1 8.5"/><path d="M23.3 14.6 L18.4 7.5 L16.8 8.5"/></g></svg></div>
<div class="act" style="left:1213px;top:542px"><svg viewBox="0 0 30 29" width="30" height="29"><g fill="none" stroke="#0ea6fa" stroke-linecap="butt" stroke-linejoin="round"><path d="M10.9 7.4 H8.4 Q7 7.4 7 8.8 V20.6 Q7 22 8.4 22 H20.9 Q22.3 22 22.3 20.6 V8.8 Q22.3 7.4 20.9 7.4 H18.6" stroke-width="2"/><path d="M14.9 4.9 V14" stroke-width="2.6"/></g></svg></div>
<div class="act" style="left:1246px;top:542px"><svg viewBox="0 0 30 29" width="30" height="29"><path d="M18.5 7.2 H8 V21.7 H21.9 V11.5" fill="none" stroke="#0ea6fa" stroke-width="2" stroke-linejoin="miter"/><path d="M11.7 17.9 L12.7 14.6 L20.3 7 L22.7 9.4 L15 17 Z M21.1 6.2 L22.6 4.8 L25 7.2 L23.5 8.6 Z" fill="#0ea6fa"/></svg></div>
<div class="act" style="left:1280px;top:542px"><svg viewBox="0 0 30 29" width="30" height="29"><g fill="none" stroke="#0ea6fa" stroke-width="1.7" stroke-linejoin="miter"><rect x="6.9" y="13.4" width="6.2" height="7.4"/><rect x="17" y="13.4" width="6.2" height="7.4"/><path d="M10.2 13.4 V7.1 H20.1 V13.4"/></g></svg></div>
<span class="cb" style="left:215px;top:589px"><svg viewBox="0 0 18 18" width="18" height="18"><path d="M4.2 9.4 L7.6 12.6 L13.8 5.6" fill="none" stroke="#fff" stroke-width="2.4" stroke-linecap="round" stroke-linejoin="round"/></svg></span>
<div class="t num" style="left:245px;top:587px">019</div>
<div class="pill" style="left:298px;top:588px;width:20px;background:#d2d6de"></div>
<div class="t" style="left:348px;top:587px">测试需求1212</div>
<div class="t" style="left:624px;top:587px">1.0版本</div>
<div class="t" style="left:714px;top:587px">admin</div>
<div class="t" style="left:794px;top:587px;color:#ff6b6b">admin</div>
<div class="t num" style="left:874px;top:587px">0</div>
<div class="abs" style="left:939px;top:593px;width:8px;height:8px;border-radius:4px;background:#006af1"></div>
<div class="t" style="left:950px;top:587px;color:#838a9d">激活</div>
<div class="t" style="left:1019px;top:587px">已立项</div>
<div class="t num c" style="left:1083px;width:20px;text-align:center;top:587px">2</div>
<div class="t num c" style="left:1113px;width:20px;text-align:center;top:587px">0</div>
<div class="t num c" style="left:1143px;width:20px;text-align:center;top:587px">0</div>
<div class="act dis" style="left:1179px;top:583px"><svg viewBox="0 0 30 29" width="30" height="29"><g fill="none" stroke="#cbcbcb" stroke-width="1.5" stroke-linejoin="round" stroke-linecap="round"><rect x="6.6" y="14.4" width="6.5" height="6.2" rx="0.8"/><rect x="16.8" y="14.4" width="6.5" height="6.2" rx="0.8"/><path d="M13.1 16.2 H16.8"/><path d="M6.6 14.6 L11.5 7.5 L13.1 8.5"/><path d="M23.3 14.6 L18.4 7.5 L16.8 8.5"/></g></svg></div>
<div class="act" style="left:1213px;top:583px"><svg viewBox="0 0 30 29" width="30" height="29"><g fill="none" stroke="#0ea6fa" stroke-linecap="butt" stroke-linejoin="round"><path d="M10.9 7.4 H8.4 Q7 7.4 7 8.8 V20.6 Q7 22 8.4 22 H20.9 Q22.3 22 22.3 20.6 V8.8 Q22.3 7.4 20.9 7.4 H18.6" stroke-width="2"/><path d="M14.9 4.9 V14" stroke-width="2.6"/></g></svg></div>
<div class="act" style="left:1246px;top:583px"><svg viewBox="0 0 30 29" width="30" height="29"><path d="M18.5 7.2 H8 V21.7 H21.9 V11.5" fill="none" stroke="#0ea6fa" stroke-width="2" stroke-linejoin="miter"/><path d="M11.7 17.9 L12.7 14.6 L20.3 7 L22.7 9.4 L15 17 Z M21.1 6.2 L22.6 4.8 L25 7.2 L23.5 8.6 Z" fill="#0ea6fa"/></svg></div>
<div class="act" style="left:1280px;top:583px"><svg viewBox="0 0 30 29" width="30" height="29"><g fill="none" stroke="#0ea6fa" stroke-width="1.7" stroke-linejoin="miter"><rect x="6.9" y="13.4" width="6.2" height="7.4"/><rect x="17" y="13.4" width="6.2" height="7.4"/><path d="M10.2 13.4 V7.1 H20.1 V13.4"/></g></svg></div>
<span class="cb" style="left:215px;top:630px"><svg viewBox="0 0 18 18" width="18" height="18"><path d="M4.2 9.4 L7.6 12.6 L13.8 5.6" fill="none" stroke="#fff" stroke-width="2.4" stroke-linecap="round" stroke-linejoin="round"/></svg></span>
<div class="t num" style="left:245px;top:628px">021</div>
<div class="pill" style="left:298px;top:629px;width:38px;background:#1976d2">three</div>
<div class="t" style="left:348px;top:628px">测试需求N</div>
<div class="t" style="left:714px;top:628px">admin</div>
<div class="t" style="left:794px;top:628px;">产品经理</div>
<div class="t num" style="left:874px;top:628px">1</div>
<div class="abs" style="left:939px;top:634px;width:8px;height:8px;border-radius:4px;background:#8666b8"></div>
<div class="t" style="left:950px;top:628px;color:#838a9d">草稿</div>
<div class="t" style="left:1019px;top:628px">未开始</div>
<div class="t num c" style="left:1083px;width:20px;text-align:center;top:628px">0</div>
<div class="t num c" style="left:1113px;width:20px;text-align:center;top:628px">0</div>
<div class="t num c" style="left:1143px;width:20px;text-align:center;top:628px">0</div>
<div class="act" style="left:1179px;top:624px"><svg viewBox="0 0 30 29" width="30" height="29"><g fill="none" stroke="#0ea6fa" stroke-width="1.5" stroke-linejoin="round" stroke-linecap="round"><rect x="6.6" y="14.4" width="6.5" height="6.2" rx="0.8"/><rect x="16.8" y="14.4" width="6.5" height="6.2" rx="0.8"/><path d="M13.1 16.2 H16.8"/><path d="M6.6 14.6 L11.5 7.5 L13.1 8.5"/><path d="M23.3 14.6 L18.4 7.5 L16.8 8.5"/></g></svg></div>
<div class="act" style="left:1213px;top:624px"><svg viewBox="0 0 30 29" width="30" height="29"><g fill="none" stroke="#0ea6fa" stroke-linecap="butt" stroke-linejoin="round"><path d="M10.9 7.4 H8.4 Q7 7.4 7 8.8 V20.6 Q7 22 8.4 22 H20.9 Q22.3 22 22.3 20.6 V8.8 Q22.3 7.4 20.9 7.4 H18.6" stroke-width="2"/><path d="M14.9 4.9 V14" stroke-width="2.6"/></g></svg></div>
<div class="act" style="left:1246px;top:624px"><svg viewBox="0 0 30 29" width="30" height="29"><path d="M18.5 7.2 H8 V21.7 H21.9 V11.5" fill="none" stroke="#0ea6fa" stroke-width="2" stroke-linejoin="miter"/><path d="M11.7 17.9 L12.7 14.6 L20.3 7 L22.7 9.4 L15 17 Z M21.1 6.2 L22.6 4.8 L25 7.2 L23.5 8.6 Z" fill="#0ea6fa"/></svg></div>
<div class="act" style="left:1280px;top:624px"><svg viewBox="0 0 30 29" width="30" height="29"><g fill="none" stroke="#0ea6fa" stroke-width="1.7" stroke-linejoin="miter"><rect x="6.9" y="13.4" width="6.2" height="7.4"/><rect x="17" y="13.4" width="6.2" height="7.4"/><path d="M10.2 13.4 V7.1 H20.1 V13.4"/></g></svg></div>
<div class="abs" style="left:200px;top:659px;width:1128px;height:40px;background:#464646"></div>
<span class="cb" style="left:215px;top:671px"><svg viewBox="0 0 18 18" width="18" height="18"><path d="M4.2 9.4 L7.6 12.6 L13.8 5.6" fill="none" stroke="#fff" stroke-width="2.4" stroke-linecap="round" stroke-linejoin="round"/></svg></span>
<div class="t" style="left:245px;top:670px;color:#fff">全选</div>
<div class="fbtn" style="left:291px;width:80px"></div><div class="abs" style="left:338px;top:665px;width:1px;height:26px;background:#dcdfe6"></div>
<div class="t" style="left:302px;top:667px">编辑</div><div class="caret up" style="left:353px;top:676px;color:#3c4353"></div>
<div class="fbtn" style="left:381px;width:62px"></div><div class="t" style="left:392px;top:667px">模块</div><div class="caret up" style="left:424px;top:676px;color:#3c4353"></div>
<div class="fbtn" style="left:453px;width:61px"></div><div class="t" style="left:464px;top:667px">计划</div><div class="caret up" style="left:495px;top:676px;color:#3c4353"></div>
<div class="fbtn" style="left:524px;width:75px"></div><div class="t" style="left:535px;top:667px">指派给</div><div class="caret up" style="left:579px;top:676px;color:#3c4353"></div>
<div class="t" style="left:1045px;top:667px;color:#fff">共 <b>10</b> 项</div>
<div class="fbtn" style="left:1103px;width:96px"></div><div class="t" style="left:1114px;top:667px">每页 <b>20</b> 项</div><div class="caret up" style="left:1181px;top:676px;color:#b4b7c0"></div>
<div class="abs" style="left:1219px;top:665px;width:28px;height:28px;border-radius:3px;background:#ebebeb"></div>
<svg class="abs" style="left:1229px;top:673px" width="8" height="12" viewBox="0 0 8 12"><path d="M6.5 1 L1.5 6 L6.5 11" fill="none" stroke="#b4b7bf" stroke-width="1.5"/></svg>
<div class="abs" style="left:1254px;top:667px;width:24px;height:24px;border-radius:12px;background:#0a90fa;color:#fff;text-align:center;line-height:24px;font-size:15px;-webkit-text-stroke:.3px #fff">1</div>
<div class="abs" style="left:1285px;top:665px;width:28px;height:28px;border-radius:3px;background:#ebebeb"></div>
<svg class="abs" style="left:1295px;top:673px" width="8" height="12" viewBox="0 0 8 12"><path d="M1.5 1 L6.5 6 L1.5 11" fill="none" stroke="#b4b7bf" stroke-width="1.5"/></svg>
</body></html>
